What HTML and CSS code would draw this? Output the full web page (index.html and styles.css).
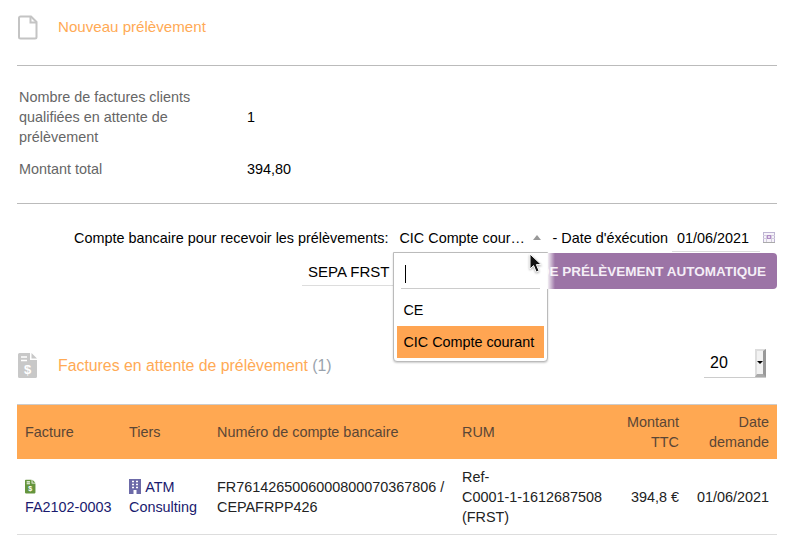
FILE: index.html
```html
<!DOCTYPE html>
<html lang="fr">
<head>
<meta charset="utf-8">
<title>Nouveau prélèvement</title>
<link rel="stylesheet" href="styles.css">
</head>
<body>

<div class="title-row new-title">
    <svg class="title-icon" width="20" height="25" viewBox="0 0 20 25">
        <path d="M2.5 1.5H13L18.5 7V22a1.5 1.5 0 0 1-1.5 1.5H2.5A1.5 1.5 0 0 1 1 22V3a1.5 1.5 0 0 1 1.5-1.5Z" fill="#fff" stroke="#c4c4c4" stroke-width="2"/>
        <path d="M12.5 1.5V7.5H18.5" fill="none" stroke="#c4c4c4" stroke-width="2"/>
    </svg>
    <span class="title-text">Nouveau prélèvement</span>
</div>

<div class="summary">
    <div class="summary-row">
        <div class="summary-label">Nombre de factures clients qualifiées en attente de prélèvement</div>
        <div class="summary-value">1</div>
    </div>
    <div class="summary-row">
        <div class="summary-label">Montant total</div>
        <div class="summary-value">394,80</div>
    </div>
</div>

<div class="form-block">
    <div class="form-line">
        <span>Compte bancaire pour recevoir les prélèvements:</span>
        <span class="select-wrap">
            <span class="select-value">CIC Compte cour…</span>
            <span class="select-arrow"></span>
            <div class="dropdown">
                <div class="search-box"><span class="caret"></span></div>
                <div class="option">CE</div>
                <div class="option selected">CIC Compte courant</div>
            </div>
            <svg class="cursor" width="14" height="21" viewBox="0 0 14 21">
                <path d="M1 1V16L4.6 12.6L7.2 19L10 17.8L7.4 11.6H12.2Z" fill="#111" stroke="#fff" stroke-width="1"/>
            </svg>
        </span>
        <span class="date-label">- Date d'éxécution</span>
        <span class="date-input">01/06/2021</span>
        <svg class="cal-icon" width="12" height="11" viewBox="0 0 12 11">
            <rect x="0.5" y="0.5" width="11" height="10" fill="#f6f3f9" stroke="#bdb4d2"/>
            <path d="M0 3.5H12M0 6.5H12M3.5 3V11M8.5 3V11" stroke="#d2cbde" stroke-width="1"/>
            <rect x="4.5" y="3.5" width="3" height="3" fill="#e6d8ee" stroke="#b08cc6"/>
            <path d="M0 10.5H12" stroke="#aaa" stroke-width="1"/>
        </svg>
    </div>
    <div class="button-line">
        <span class="sepa-input">SEPA FRST</span>
        <button class="action-button">CRÉER UN ORDRE DE PRÉLÈVEMENT AUTOMATIQUE</button>
    </div>
</div>

<div class="title-row list-title">
    <svg class="title-icon" width="20" height="25" viewBox="0 0 20 25">
        <path d="M0 1.5A1.5 1.5 0 0 1 1.5 0H12V7H19V23.5A1.5 1.5 0 0 1 17.5 25H1.5A1.5 1.5 0 0 1 0 23.5Z" fill="#c8c8c8"/>
        <path d="M13.5 0L19 5.5H13.5Z" fill="#c8c8c8"/>
        <path d="M3 4H9M3 7.5H9" stroke="#fff" stroke-width="1.6"/>
        <text x="9.5" y="21" class="dollar">$</text>
    </svg>
    <span class="title-text">Factures en attente de prélèvement <span class="count">(1)</span></span>
    <span class="page-size">
        <span>20</span>
        <span class="spin"><span class="spin-arrow"></span></span>
    </span>
</div>

<table class="list">
    <thead>
        <tr>
            <th>Facture</th>
            <th>Tiers</th>
            <th>Numéro de compte bancaire</th>
            <th>RUM</th>
            <th class="right">Montant TTC</th>
            <th class="right">Date demande</th>
        </tr>
    </thead>
    <tbody>
        <tr>
            <td>
                <svg class="mini-icon" width="11" height="15" viewBox="0 0 20 25">
                    <path d="M0 1.5A1.5 1.5 0 0 1 1.5 0H12V7H19V23.5A1.5 1.5 0 0 1 17.5 25H1.5A1.5 1.5 0 0 1 0 23.5Z" fill="#65953d"/>
                    <path d="M13.5 0L19 5.5H13.5Z" fill="#65953d"/>
                    <path d="M3 4H9M3 7.5H9" stroke="#fff" stroke-width="2"/>
                    <text x="9.5" y="21" class="dollar">$</text>
                </svg><br>
                <a>FA2102-0003</a>
            </td>
            <td>
                <svg class="mini-icon building" width="12" height="15" viewBox="0 0 12 15">
                    <rect width="12" height="15" fill="#6c6aa8"/>
                    <path d="M3 2.5H5M7 2.5H9M3 5.5H5M7 5.5H9M3 8.5H5M7 8.5H9" stroke="#fff" stroke-width="1.4"/>
                    <rect x="4.5" y="11" width="3" height="4" fill="#fff"/>
                </svg>
                <a>ATM Consulting</a>
            </td>
            <td>FR7614265006000800070367806 / CEPAFRPP426</td>
            <td>Ref-<span class="nowrap">C0001-1-1612687508</span> (FRST)</td>
            <td class="right nowrap">394,8 €</td>
            <td class="right nowrap">01/06/2021</td>
        </tr>
    </tbody>
</table>

</body>
</html>
```

FILE: styles.css
```css
* {
    box-sizing: border-box;
}

body {
    margin: 0;
    padding: 0 15px 0 17px;
    background-color: white;
    color: black;
    font-family: "Liberation Sans", Arial, sans-serif;
    font-size: 14.4px;
    line-height: 1.4;
    overflow: hidden;
    height: 545px;
}

.title-row {
    display: flex;
    align-items: center;
}

.title-icon {
    margin-left: 1px;
    margin-right: 20px;
    flex-shrink: 0;
}

.title-text {
    color: #ffaa55;
    font-size: 15.12px;
}

.count {
    color: #9aa3ad;
}

.new-title {
    height: 66px;
    padding-bottom: 11px;
    border-bottom: 1px solid #bbb;
}

.list-title .title-text {
    font-size: 15.84px;
}

.summary {
    padding: 21px 0 23px;
    border-bottom: 1px solid #bbb;
}

.summary-row {
    display: flex;
    align-items: center;
    margin-bottom: 12px;
}

.summary-row:last-child {
    margin-bottom: 0;
}

.summary-label {
    width: 230px;
    padding-left: 2px;
    padding-right: 30px;
    color: #666;
}

.form-block {
    padding-top: 24px;
}

.form-line {
    display: flex;
    justify-content: flex-end;
    align-items: center;
    height: 20px;
}

.select-wrap {
    position: relative;
    display: flex;
    align-items: center;
    width: 160px;
    height: 20px;
    margin-left: 4px;
    padding-left: 7px;
}

.select-value {
    white-space: nowrap;
}

.select-arrow {
    width: 0;
    height: 0;
    margin-left: 8px;
    border-left: 4px solid transparent;
    border-right: 4px solid transparent;
    border-bottom: 5px solid #999;
}

.dropdown {
    position: absolute;
    left: 1px;
    top: 24px;
    z-index: 5;
    width: 155px;
    height: 110px;
    padding: 3px;
    background-color: white;
    border: 1px solid #bbb;
    border-radius: 0 0 4px 4px;
    box-shadow: 0 1px 2px rgba(0, 0, 0, 0.2);
}

/* white fade the open list leaves on the button behind it */
.dropdown::after {
    content: "";
    position: absolute;
    left: 100%;
    top: 0;
    width: 8px;
    height: 36px;
    background: linear-gradient(to right, white, rgba(255, 255, 255, 0));
}

.search-box {
    height: 33px;
    margin: 0 4px 5px;
    padding-top: 9px;
    border-bottom: 1px solid #ccc;
}

.caret {
    display: block;
    width: 1px;
    height: 18px;
    margin-left: 4px;
    background-color: black;
}

.option {
    height: 32px;
    padding: 6px 5px 6px 6px;
    line-height: 20px;
    letter-spacing: -0.02px;
    white-space: nowrap;
}

.option.selected {
    background-color: #ffa552;
}

.cursor {
    position: absolute;
    left: 137px;
    top: 25px;
    z-index: 6;
    filter: drop-shadow(0 1px 1px rgba(0, 0, 0, 0.35));
}

.date-input {
    align-self: flex-start;
    width: 88px;
    height: 24px;
    margin-left: 4px;
    padding-left: 5px;
    border-bottom: 1px solid #ddd;
}

.cal-icon {
    margin-left: 3px;
    margin-right: 2px;
}

.button-line {
    display: flex;
    justify-content: flex-end;
    align-items: flex-start;
    margin-top: 5px;
}

.sepa-input {
    width: 100px;
    height: 33px;
    padding: 8px 6px 0;
    border-bottom: 1px solid #ddd;
    font-size: 15px;
    white-space: nowrap;
}

.action-button {
    flex: 0 0 375px;
    height: 36px;
    padding: 1px 11px 0;
    border: none;
    border-radius: 4px;
    background-color: #9c74a6;
    color: #f4eef6;
    font-family: inherit;
    font-size: 13.5px;
    font-weight: bold;
    white-space: nowrap;
    text-align: right;
    overflow: hidden;
}

.list-title {
    position: relative;
    height: 30px;
    margin-top: 62px;
}

.page-size {
    position: absolute;
    right: 11px;
    top: -2px;
    display: flex;
    justify-content: space-between;
    width: 62px;
    height: 29px;
    padding-left: 6px;
    font-size: 16px;
    line-height: 28px;
    border-bottom: 1px solid #ccc;
}

.spin {
    display: flex;
    align-items: center;
    justify-content: center;
    width: 11px;
    height: 28px;
    background-color: #f2f2f2;
    border-top: 2px solid #ddd;
    border-left: 2px solid #ddd;
    border-right: 3px solid #999;
    border-bottom: 3px solid #aaa;
}

.spin-arrow {
    width: 0;
    height: 0;
    border-left: 3px solid transparent;
    border-right: 3px solid transparent;
    border-top: 3px solid black;
}

.list {
    width: 100%;
    margin-top: 23px;
    border-collapse: collapse;
    table-layout: fixed;
}

.list th {
    padding: 7px 8px;
    background-color: #ffa852;
    border-top: 1px solid #ccc;
    color: #5a4636;
    font-weight: normal;
    text-align: left;
}

.list td {
    padding: 8px 8px 7px;
    border-bottom: 1px solid #ddd;
    vertical-align: middle;
    color: #222;
}

.list th:nth-child(1) { width: 104px; }
.list th:nth-child(2) { width: 88px; }
.list th:nth-child(3) { width: 245px; }
.list th:nth-child(4) { width: 160px; }
.list th:nth-child(5) { width: 73px; }

.list a {
    color: #1a1a6e;
}

.list .right {
    text-align: right;
}

.nowrap {
    white-space: nowrap;
}

.mini-icon {
    vertical-align: -2px;
}

.building {
    margin-right: 1px;
}

.dollar {
    fill: white;
    font-size: 13px;
    font-weight: bold;
    text-anchor: middle;
}
```
